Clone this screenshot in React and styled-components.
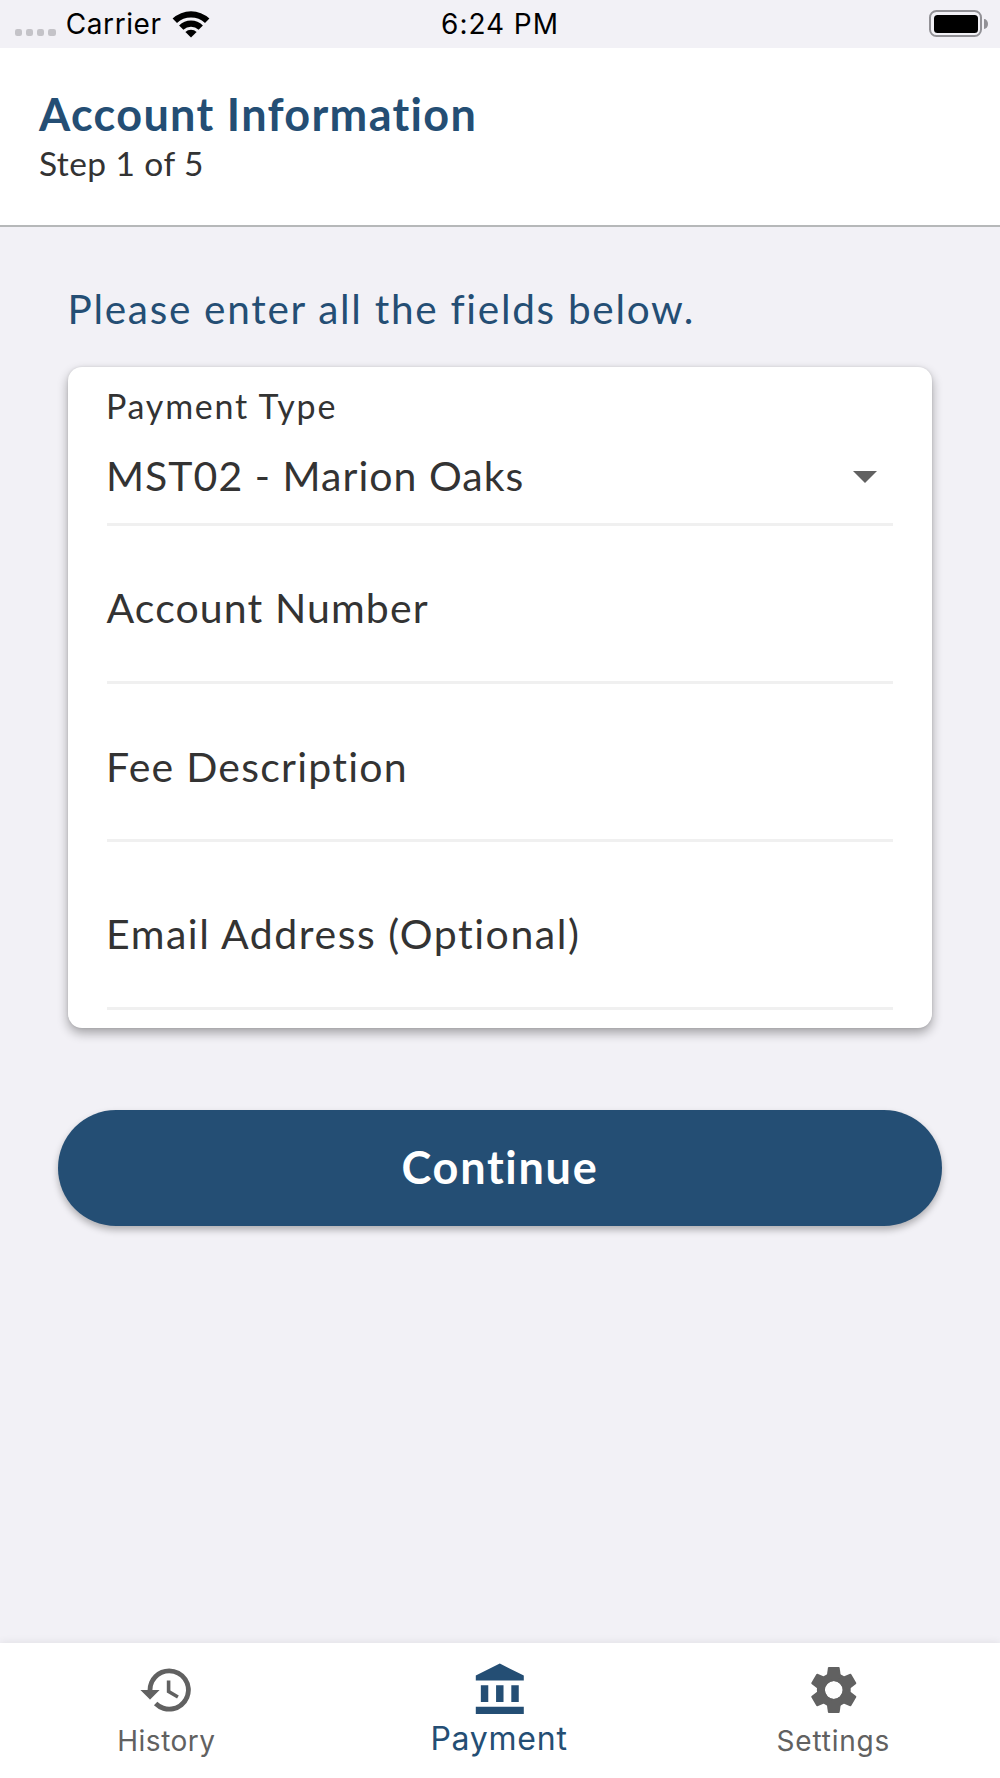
import React from 'react';
import styled, { createGlobalStyle } from 'styled-components';

const color = {
  page: '#f2f1f6',
  brand: '#244e74',
  text: '#333333',
  muted: '#616161',
  rule: '#f0f0f0',
};

const GlobalStyle = createGlobalStyle`
  body {
    margin: 0;
    background: ${color.page};
  }
  * {
    box-sizing: border-box;
  }
`;

const Screen = styled.div`
  display: flex;
  flex-direction: column;
  height: 1778px;
  overflow: hidden;
  background: ${color.page};
  color: ${color.text};
  font-family: Lato, sans-serif;
  white-space: nowrap;
`;

/* Status bar */

const StatusBar = styled.div`
  display: grid;
  grid-template-columns: 1fr auto 1fr;
  align-items: center;
  flex: none;
  height: 48px;
  padding: 0 12px 0 14.5px;
  color: #000;
  font-family: Inter, sans-serif;
  font-size: 28px;
  line-height: 48px;
`;

const StatusLeft = styled.div`
  display: flex;
  align-items: center;
`;

const SignalDots = styled.div`
  display: flex;
  gap: 4px;
  margin: 17px 10px 0 0;
`;

const Dot = styled.span`
  width: 7.3px;
  height: 7.3px;
  border-radius: 2.2px;
  background: #c4c3c8;
`;

const Carrier = styled.span`
  letter-spacing: 0.6px;
`;

const WifiIcon = styled.svg`
  width: 38px;
  height: 28px;
  margin: -1px 0 0 10px;
`;

const Clock = styled.span`
  margin-right: 2.5px;
  letter-spacing: 0.95px;
`;

const Battery = styled.div`
  display: flex;
  align-items: center;
  justify-self: end;
  gap: 2px;
  margin-top: -1px;
`;

const BatteryShell = styled.div`
  width: 53px;
  height: 27px;
  padding: 2.5px;
  border: 2px solid #929196;
  border-radius: 7.5px;
`;

const BatteryCharge = styled.div`
  height: 100%;
  border-radius: 3.5px;
  background: #000;
`;

const BatteryCap = styled.div`
  width: 4px;
  height: 10px;
  border-radius: 0 4px 4px 0 / 0 5px 5px 0;
  background: #929196;
`;

/* Header */

const Header = styled.header`
  flex: none;
  height: 179px;
  padding: 42px 39px 0;
  border-bottom: 2px solid #b6b8b9;
  background: #fff;
`;

const Title = styled.h1`
  margin: 0;
  color: ${color.brand};
  font-size: 45px;
  font-weight: 700;
  line-height: 48px;
  letter-spacing: 1.33px;
`;

const Step = styled.p`
  margin: 5px 0 0;
  font-size: 33.5px;
  line-height: 40px;
  letter-spacing: 0.42px;
`;

/* Form */

const Main = styled.main`
  flex: 1;
  padding: 58px 58px 0;
`;

const Prompt = styled.p`
  margin: 0 9.5px;
  color: ${color.brand};
  font-size: 40.5px;
  line-height: 48px;
  letter-spacing: 1.72px;
`;

const Card = styled.section`
  margin: 34px 10px 0;
  padding: 0 39px 18px 38.5px;
  border-radius: 14px;
  background: #fff;
  box-shadow: 0 5px 11px rgba(0, 0, 0, 0.33), 0 0 3px rgba(0, 0, 0, 0.1);
`;

const Field = styled.div`
  height: ${(p) => p.$height}px;
  padding-top: ${(p) => p.$top}px;
  border-bottom: 3px solid ${color.rule};
`;

const SmallLabel = styled.div`
  margin-left: -0.5px;
  font-size: 34px;
  line-height: 40px;
  letter-spacing: 1.75px;
`;

const SelectRow = styled.div`
  display: flex;
  align-items: center;
  justify-content: space-between;
  margin-top: 25.5px;
  padding-right: 16px;
`;

const FieldText = styled.div`
  margin-left: ${(p) => p.$offset ?? -0.5}px;
  font-size: 41px;
  line-height: 48px;
  letter-spacing: ${(p) => p.$tracking}px;
`;

const Caret = styled.svg`
  width: 24px;
  height: 12px;
  margin-top: 3px;
`;

const ContinueButton = styled.button`
  display: flex;
  align-items: center;
  justify-content: center;
  width: 100%;
  height: 116px;
  margin-top: 82px;
  padding: 0 0 2px;
  border: 0;
  border-radius: 58px;
  background: ${color.brand};
  color: #fff;
  font-family: inherit;
  font-size: 45px;
  font-weight: 700;
  line-height: 54px;
  letter-spacing: 1.7px;
  box-shadow: 0 4px 7px rgba(0, 0, 0, 0.28);
`;

/* Tab bar */

const TabBar = styled.nav`
  display: grid;
  grid-template-columns: repeat(3, 1fr);
  flex: none;
  height: 135.5px;
  padding-top: 18px;
  background: #fff;
  box-shadow: 0 -1px 8px rgba(0, 0, 0, 0.07);
  font-family: Inter, sans-serif;
`;

const Tab = styled.div`
  display: flex;
  flex-direction: column;
  align-items: center;
  gap: ${(p) => (p.$active ? 1.5 : 5.5)}px;
  color: ${(p) => (p.$active ? color.brand : color.muted)};
  font-size: ${(p) => (p.$active ? 32 : 28)}px;
  line-height: ${(p) => (p.$active ? 38 : 34)}px;
`;

const TabLabel = styled.span`
  margin-right: ${(p) => (p.$shift ?? 0)}px;
  letter-spacing: ${(p) => p.$tracking}px;
`;

const TabIcon = styled.svg`
  display: block;
  width: 57.6px;
  height: 58px;
  fill: currentColor;
`;

const HistoryGlyph = () => (
  <TabIcon viewBox="0 0 24 24">
    <path d="M13 3a9 9 0 0 0-9 9H1l3.89 3.89.07.14L9 12H6a7 7 0 1 1 2.06 4.94l-1.42 1.42A9 9 0 1 0 13 3zm-1 5v5l4.28 2.54.72-1.21-3.5-2.08V8z" />
  </TabIcon>
);

const BankGlyph = () => (
  <TabIcon viewBox="0 0 24 24">
    <path d="M4.1 10h3.1v7H4.1zM10.45 10h3.1v7h-3.1zM2 19h20v3H2zM16.8 10h3.1v7h-3.1zM12 1 2 6v2h20V6z" />
  </TabIcon>
);

const tooth = 'M-6.9-15.4-5.9-22.4Q-5.7-23.2-5-23.2H5Q5.7-23.2 5.9-22.4L6.9-15.4L8 0H-8Z';

const GearGlyph = () => (
  <TabIcon viewBox="-29 -29 58 58">
    <path fill="none" stroke="currentColor" strokeWidth="8.1" d="M0-13A13 13 0 1 1 0 13A13 13 0 1 1 0-13" />
    <mask id="hub">
      <rect x="-29" y="-29" width="58" height="58" fill="#fff" />
      <circle r="9" fill="#000" />
    </mask>
    <g mask="url(#hub)">
      {[0, 60, 120, 180, 240, 300].map((angle) => (
        <path key={angle} d={tooth} transform={`rotate(${angle})`} />
      ))}
    </g>
  </TabIcon>
);

export default function App() {
  return (
    <Screen>
      <GlobalStyle />
      <StatusBar>
        <StatusLeft>
          <SignalDots>
            <Dot />
            <Dot />
            <Dot />
            <Dot />
          </SignalDots>
          <Carrier>Carrier</Carrier>
          <WifiIcon viewBox="-19 -27.5 38 28">
            <path d="M-18.4-18.9A27 27 0 0 1 18.4-18.9L14-14.5A20.8 20.8 0 0 0-14-14.5Z" />
            <path d="M-11.9-12.1A17.2 17.2 0 0 1 11.9-12.1L7.6-7.8A11 11 0 0 0-7.6-7.8Z" />
            <path d="M-5.6-5.5A8 8 0 0 1 5.6-5.5L0 0Z" />
          </WifiIcon>
        </StatusLeft>
        <Clock>6:24 PM</Clock>
        <Battery>
          <BatteryShell>
            <BatteryCharge />
          </BatteryShell>
          <BatteryCap />
        </Battery>
      </StatusBar>

      <Header>
        <Title>Account Information</Title>
        <Step>Step 1 of 5</Step>
      </Header>

      <Main>
        <Prompt>Please enter all the fields below.</Prompt>
        <Card>
          <Field $height={159} $top={19}>
            <SmallLabel>Payment Type</SmallLabel>
            <SelectRow>
              <FieldText $tracking={1.03}>MST02 - Marion Oaks</FieldText>
              <Caret viewBox="0 0 24 12">
                <path d="M0 0H24L12 12Z" fill={color.muted} />
              </Caret>
            </SelectRow>
          </Field>
          <Field $height={158} $top={57.5}>
            <FieldText $tracking={1.12} $offset={0}>Account Number</FieldText>
          </Field>
          <Field $height={158} $top={58.5}>
            <FieldText $tracking={1.25}>Fee Description</FieldText>
          </Field>
          <Field $height={168} $top={68}>
            <FieldText $tracking={1.53}>Email Address (Optional)</FieldText>
          </Field>
        </Card>
        <ContinueButton>Continue</ContinueButton>
      </Main>

      <TabBar>
        <Tab>
          <HistoryGlyph />
          <TabLabel $tracking={0.5} $shift={0.5}>History</TabLabel>
        </Tab>
        <Tab $active>
          <BankGlyph />
          <TabLabel $tracking={0.75} $shift={2}>Payment</TabLabel>
        </Tab>
        <Tab>
          <GearGlyph />
          <TabLabel $tracking={0.79}>Settings</TabLabel>
        </Tab>
      </TabBar>
    </Screen>
  );
}
